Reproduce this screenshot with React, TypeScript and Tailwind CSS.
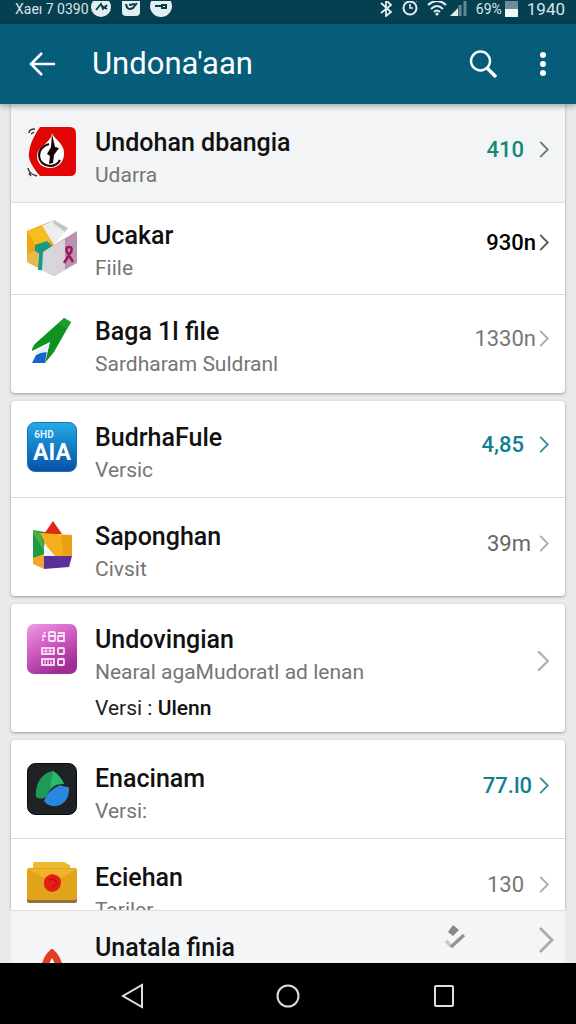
import type { ReactNode } from "react";
import clsx from "clsx";

interface Entry {
	id: string;
	title: string;
	subtitle: string;
	note?: { label: string; text: string };
	value?: string;
	valueClass?: string;
	chevronClass: string;
	rowClass: string;
	icon: ReactNode;
}

function FlameIcon() {
	return (
		<svg viewBox="0 0 50 50" className="size-full" aria-hidden="true">
			<path
				d="M13 0H43Q49 0 49 7V43Q49 49 43 49H13Q9 45 5 38Q1 31 2 26Q3 17 7 10Q10 4 13 0Z"
				fill="#e10605"
			/>
			<path d="M25 6C27 12 38 17 37 27C37 35 31 41 23 41C15 41 10 36 10 29C10 22 17 19 20 15C23 12 25 9 25 6Z" fill="#fff" />
			<path d="M22 17Q12 20 12 29Q13 38 23 39Q30 39 33 33" fill="none" stroke="#1a0808" strokeWidth="2.2" />
			<path d="M25 7L28 20L32 21L27 28L26 36L22 37L23 29L20 27L24 20Z" fill="#160505" />
			<path d="M2 6Q2 2 8 2M4 7L7 5M1 41Q2 47 10 49M2 46L4 49" fill="none" stroke="#333" strokeWidth="1.5" />
		</svg>
	);
}

function CubeIcon() {
	return (
		<svg viewBox="0 0 50 56" className="h-14 w-full" aria-hidden="true">
			<path d="M0 11L27 0L27 56L0 42Z" fill="#f1a512" />
			<path d="M27 0L41 8L27 25L15 6Z" fill="#eceded" />
			<path d="M27 0L41 8L38 12L26 3Z" fill="#c3c6c8" />
			<path d="M0 11L15 6L25 22L8 24Z" fill="#f7bd1c" />
			<path d="M27 25L50 11V43L27 56Z" fill="#b891b3" />
			<path d="M27 25L38 19V50L27 56Z" fill="#d8d3d9" />
			<path d="M11 34L27 25V56L11 49Z" fill="#d5d7d9" />
			<path d="M0 34L10 30L12 48L0 42Z" fill="#e7b84a" />
			<path d="M8 25L20 21L25 26L16 32L15 50L11 50L12 33L8 31Z" fill="#179a83" />
			<path d="M37 43L44 32Q46 27 42 27Q38 27 40 32L46 42" fill="none" stroke="#a4165f" strokeWidth="2.5" />
		</svg>
	);
}

function WingIcon() {
	return (
		<svg viewBox="0 -2 50 50" className="size-full" aria-hidden="true">
			<path d="M37 0L44 4L27 34L18 45L23 24L5 33Q5 28 10 24Z" fill="#0f9220" />
			<path d="M37 0L44 4L40 11L32 7Z" fill="#1ba22c" />
			<path d="M5 45L9 37L20 32L18 45Z" fill="#1763cf" />
			<path d="M23 24L20 34L6 36Z" fill="#e6f0fb" />
		</svg>
	);
}

function BlueTileIcon() {
	return (
		<span className="flex size-full flex-col items-center justify-center rounded-lg border border-[#1c72b4] bg-linear-to-b from-[#25a9e6] to-[#0a51a8] font-bold text-white">
			<span className="-ml-4 text-[10px] leading-3 text-sky-100">6HD</span>
			<span className="text-[23px] leading-6">AIA</span>
		</span>
	);
}

function BlocksIcon() {
	return (
		<svg viewBox="0 0 50 50" className="size-full" aria-hidden="true">
			<path d="M26 0L35 13H17Z" fill="#dd2817" />
			<path d="M6 9L18 11L17 34L6 37Z" fill="#1d9b49" />
			<path d="M13 12L45 14V35H28L20 26Z" fill="#f6ae1c" />
			<path d="M34 14L45 14V35L36 34Z" fill="#eea014" />
			<path d="M17 25L28 35H17Z" fill="#e6f7fa" />
			<path d="M6 37L17 33V48L6 43Z" fill="#f2a72c" />
			<path d="M17 35H45L42 46L17 48Z" fill="#5b2f99" />
			<path d="M13 12L6 9L6 12L17 30V25Z" fill="#57aa3f" />
		</svg>
	);
}

function KeypadIcon() {
	return (
		<svg viewBox="0 0 50 50" className="size-full" aria-hidden="true">
			<defs>
				<linearGradient id="keypad" x1="0" y1="0" x2="0.5" y2="1">
					<stop offset="0" stopColor="#f09ae4" />
					<stop offset="0.5" stopColor="#d05cc2" />
					<stop offset="1" stopColor="#a02d93" />
				</linearGradient>
			</defs>
			<rect width="50" height="50" rx="7" fill="url(#keypad)" />
			<g fill="none" stroke="#fbe3f8" strokeWidth="1.8">
				<path d="M19 8Q16 9 16 13V17M16 12H19" strokeDasharray="3 1" />
				<rect x="22" y="8" width="6" height="9" rx="1" />
				<path d="M22 12H28M31 9H37V17H31V12H37" />
				<rect x="15" y="24" width="12" height="6" />
				<path d="M15 27H27M19 24V30M23 24V30" strokeWidth="1.2" />
				<rect x="31" y="24" width="6" height="6" rx="1" />
				<rect x="15" y="35" width="12" height="6" />
				<path d="M18 35V41M21 35V41M24 37V41" strokeWidth="1.2" />
				<rect x="31" y="35" width="6" height="6" rx="1" />
			</g>
		</svg>
	);
}

function GlobeIcon() {
	return (
		<svg viewBox="0 0 50 52" className="h-[52px] w-full" aria-hidden="true">
			<rect x="0.5" y="0.5" width="49" height="51" rx="8" fill="#1e2224" stroke="#08090a" />
			<path d="M9 34C8 22 14 10 26 8C31 11 35 16 37 21C28 21 23 25 19 34C15 36 12 36 9 34Z" fill="#1f9a55" />
			<path d="M26 8C31 11 35 16 37 21C31 20 27 22 23 25Z" fill="#2bb969" />
			<path d="M17 38C20 28 28 25 33 22C38 25 43 22 42 27C42 37 35 43 28 43C23 43 19 41 17 38Z" fill="#2b86dd" />
		</svg>
	);
}

function EnvelopeIcon() {
	return (
		<svg viewBox="0 0 50 42" className="h-[42px] w-full" aria-hidden="true">
			<path d="M6 2Q6 0 8 0H37Q39 0 40 2L43 3V6H6Z" fill="#eabb31" />
			<path d="M0 36H50V39Q50 41 48 41H2Q0 41 0 39Z" fill="#8c7440" />
			<rect y="6" width="50" height="32" rx="2" fill="#e2a31c" />
			<path d="M0 7H50L26 20Z" fill="#efb42c" />
			<path d="M25 12Q35 14 34 21Q33 29 25 30Q16 28 17 20Q17 14 25 12Z" fill="#e81d12" />
			<path d="M22 18Q26 16 29 19T25 25" fill="none" stroke="#a90f0a" />
		</svg>
	);
}

const groups: Entry[][] = [
	[
		{
			id: "undohan",
			title: "Undohan dbangia",
			subtitle: "Udarra",
			value: "410",
			valueClass: "mr-[15px] text-[#158777] font-medium",
			chevronClass: "text-[#647c78]",
			rowClass: "pt-[23px] pb-[11px] bg-[#f3f4f5]",
			icon: <FlameIcon />,
		},
		{
			id: "ucakar",
			title: "Ucakar",
			subtitle: "Fiile",
			value: "930n",
			valueClass: "mr-[3px] text-black font-medium",
			chevronClass: "text-[#555]",
			rowClass: "pt-[17px] pb-[10px]",
			icon: <CubeIcon />,
		},
		{
			id: "baga",
			title: "Baga 1l file",
			subtitle: "Sardharam Suldranl",
			value: "1330n",
			valueClass: "mr-[3px] text-[#777]",
			chevronClass: "text-[#aaa]",
			rowClass: "pt-[21px] pb-[13px]",
			icon: <WingIcon />,
		},
	],
	[
		{
			id: "budrha",
			title: "BudrhaFule",
			subtitle: "Versic",
			value: "4,85",
			valueClass: "mr-[15px] text-[#118090] font-medium",
			chevronClass: "text-[#398c98]",
			rowClass: "pt-[21px] pb-[11px]",
			icon: <BlueTileIcon />,
		},
		{
			id: "saponghan",
			title: "Saponghan",
			subtitle: "Civsit",
			value: "39m",
			valueClass: "mr-[8px] text-[#666]",
			chevronClass: "text-[#aaa]",
			rowClass: "pt-[23px] pb-[11px]",
			icon: <BlocksIcon />,
		},
	],
	[
		{
			id: "undovingian",
			title: "Undovingian",
			subtitle: "Nearal agaMudoratl ad lenan",
			note: { label: "Versi :", text: "Ulenn" },
			chevronClass: "text-[#b3b3b3]",
			rowClass: "pt-5 pb-2",
			icon: <KeypadIcon />,
		},
	],
	[
		{
			id: "enacinam",
			title: "Enacinam",
			subtitle: "Versi:",
			value: "77.l0",
			valueClass: "mr-[7px] text-[#118090] font-medium",
			chevronClass: "text-[#398c98]",
			rowClass: "pt-[23px] pb-[11px]",
			icon: <GlobeIcon />,
		},
		{
			id: "eciehan",
			title: "Eciehan",
			subtitle: "Tariler",
			value: "130",
			valueClass: "mr-[15px] text-[#777]",
			chevronClass: "text-[#aaa]",
			rowClass: "pt-[23px] pb-[11px]",
			icon: <EnvelopeIcon />,
		},
	],
];

function Chevron({ large, className }: { large?: boolean; className: string }) {
	return (
		<svg
			viewBox="0 0 10 18"
			className={clsx("shrink-0", large ? "h-[22px] w-3" : "h-[17px] w-[10px]", className)}
			fill="none"
			stroke="currentColor"
			strokeWidth="2"
			aria-hidden="true">
			<path d="M1 1L9 9L1 17" />
		</svg>
	);
}

function Row({ entry }: { entry: Entry }) {
	return (
		<li className="border-b border-[#dcdddd] last:border-b-0">
			<button type="button" className={clsx("flex w-full items-start px-4 text-left", entry.rowClass)}>
				<span className="block size-[50px] shrink-0">{entry.icon}</span>
				<span className="ml-[18px] min-w-0 flex-1">
					<span className="block truncate text-[25px] leading-8 font-medium text-[#111]">{entry.title}</span>
					<span className="block truncate text-[21px] leading-8 text-[#757575]">{entry.subtitle}</span>
					{entry.note && (
						<span className="mt-1 block text-[21px] leading-8 text-[#222]">
							{entry.note.label} <span className="font-medium text-[#111]">{entry.note.text}</span>
						</span>
					)}
				</span>
				<span className={clsx("flex items-center", entry.note ? "h-[74px]" : "h-11")}>
					{entry.value && <span className={clsx("text-[22px]", entry.valueClass)}>{entry.value}</span>}
					<Chevron large={!entry.value} className={entry.chevronClass} />
				</span>
			</button>
		</li>
	);
}

function StatusBar() {
	return (
		<div className="flex h-6 shrink-0 items-start justify-between bg-[#063f50] pr-[11px] pl-[15px] leading-[18px] text-[#d9e6e9]">
			<div className="flex items-center">
				<span className="w-[76px] text-[14px] whitespace-nowrap">Xaeı 7 0390</span>
				<svg viewBox="0 0 84 16" className="h-4 w-[84px]" aria-hidden="true">
					<circle cx="10" cy="6" r="10" fill="#e3eef0" />
					<path d="M5 9L10 3L12 8L16 4M11 5L16 8" fill="none" stroke="#0c3c48" strokeWidth="1.8" />
					<rect x="31" y="-4" width="18" height="19" rx="4" fill="#e3eef0" />
					<path d="M35 3Q36 10 42 7L46 2M38 4L44 3" fill="none" stroke="#0c3c48" strokeWidth="2" />
					<circle cx="70" cy="5" r="11" fill="#e3eef0" />
					<path d="M64 5H70M71 4H75V7H71Z" fill="none" stroke="#0c3c48" strokeWidth="2" />
				</svg>
			</div>
			<div className="flex items-center">
				<svg viewBox="0 0 92 16" className="mr-1 h-4 w-[92px]" fill="none" stroke="#e3eef0" aria-hidden="true">
					<path d="M1 2L11 11L6 15V-1L11 4L1 12" strokeWidth="1.8" />
					<circle cx="30" cy="7" r="6.5" strokeWidth="2" />
					<path d="M30 3V7H33M23 0L26 -2M37 0L34 -2" strokeWidth="1.6" />
					<path d="M48 4Q57 -4 66 4M51 8Q57 2 63 8M54 11Q57 8 60 11" strokeWidth="2" />
					<circle cx="57" cy="13" r="1.6" fill="#e3eef0" stroke="none" />
					<path d="M70 15L78 7V15Z" fill="#e3eef0" stroke="none" />
					<path d="M80 15V4M85 15V0" stroke="#628792" strokeWidth="3" />
				</svg>
				<span className="w-7 text-[14px]">69%</span>
				<span className="mr-[9px] ml-px h-4 w-[13px] border-t-8 border-[#718b93] bg-[#f1f6f7]" />
				<span className="text-[17px]">1940</span>
			</div>
		</div>
	);
}

function AppBar() {
	return (
		<header className="z-10 flex h-20 shrink-0 items-center bg-[#055d79] text-white shadow-[0_2px_6px_rgba(0,0,0,0.35)]">
			<button type="button" aria-label="Back" className="ml-7">
				<svg viewBox="0 0 28 28" className="size-7" fill="none" stroke="currentColor" strokeWidth="2.6" aria-hidden="true">
					<path d="M27 14H3M14 3L3 14L14 25" />
				</svg>
			</button>
			<h1 className="ml-9 flex-1 text-[31px] leading-10">Undona'aan</h1>
			<button type="button" aria-label="Search">
				<svg viewBox="0 0 28 28" className="size-7" fill="none" stroke="currentColor" aria-hidden="true">
					<circle cx="11.5" cy="11" r="9.5" strokeWidth="2.4" />
					<path d="M18 18L27 27" strokeWidth="3.4" />
				</svg>
			</button>
			<button type="button" aria-label="More options" className="mr-6 ml-[37px]">
				<svg viewBox="0 0 18 26" className="h-[26px] w-[18px]" fill="currentColor" aria-hidden="true">
					<circle cx="9" cy="4" r="3" />
					<circle cx="9" cy="13" r="3" />
					<circle cx="9" cy="22" r="3" />
				</svg>
			</button>
		</header>
	);
}

function BottomRow() {
	return (
		<div className="mx-[11px] h-[53px] shrink-0 overflow-hidden border-t border-[#dcdddd] bg-[#f4f5f6]">
			<button type="button" className="flex w-full items-start pt-3 pr-[11px] pl-4 text-left">
				<span className="flex w-[50px] justify-center pt-[26px]">
					<svg viewBox="0 0 24 32" className="h-8 w-6" fill="none" stroke="#e23c22" strokeWidth="7" aria-hidden="true">
						<path d="M4 32Q3 12 12 4Q21 12 20 32" />
					</svg>
				</span>
				<span className="ml-[18px] flex-1 pt-[9px] text-[25px] leading-8 font-medium text-[#111]">Unatala finia</span>
				<svg viewBox="0 0 22 26" className="mr-[73px] h-[26px] w-[22px]" aria-hidden="true">
					<path d="M9 2L15 7L9 13L4 9Z" fill="#858789" />
					<path d="M2 18L8 24" stroke="#c6c7c8" strokeWidth="3.4" />
					<path d="M7 24L20 12" stroke="#929496" strokeWidth="3.4" />
				</svg>
				<svg viewBox="0 0 15 26" className="mt-1 h-[26px] w-[15px]" fill="none" stroke="#aaa" strokeWidth="2.8" aria-hidden="true">
					<path d="M1 1L13 13L1 25" />
				</svg>
			</button>
		</div>
	);
}

function NavBar() {
	return (
		<nav className="flex h-[61px] shrink-0 items-center justify-center gap-[132px] bg-black pt-1 text-[#dedede]">
			<button type="button" aria-label="Back">
				<svg viewBox="0 0 24 26" className="h-[26px] w-6" fill="none" stroke="currentColor" strokeWidth="2" aria-hidden="true">
					<path d="M22 2V24L3 13Z" />
				</svg>
			</button>
			<button type="button" aria-label="Home">
				<svg viewBox="0 0 24 24" className="size-6" fill="none" stroke="currentColor" strokeWidth="2" aria-hidden="true">
					<circle cx="12" cy="12" r="10.5" />
				</svg>
			</button>
			<button type="button" aria-label="Recent apps">
				<svg viewBox="0 0 24 24" className="size-6" fill="none" stroke="currentColor" strokeWidth="2" aria-hidden="true">
					<rect x="3" y="2" width="18" height="20" rx="1" />
				</svg>
			</button>
		</nav>
	);
}

export default function App() {
	return (
		<div className="flex h-screen flex-col overflow-hidden bg-[#e8eaec] font-[Roboto,sans-serif]">
			<StatusBar />
			<AppBar />
			<main className="flex min-h-0 flex-1 flex-col gap-2 overflow-hidden px-[11px]">
				{groups.map((entries, i) => (
					<ul
						key={entries[0].id}
						className={clsx(
							"shrink-0 overflow-hidden bg-white shadow-[0_1px_3px_rgba(0,0,0,0.35)]",
							i === 0 ? "rounded-b-sm" : "rounded-sm",
						)}>
						{entries.map((entry) => (
							<Row key={entry.id} entry={entry} />
						))}
					</ul>
				))}
			</main>
			<BottomRow />
			<NavBar />
		</div>
	);
}
